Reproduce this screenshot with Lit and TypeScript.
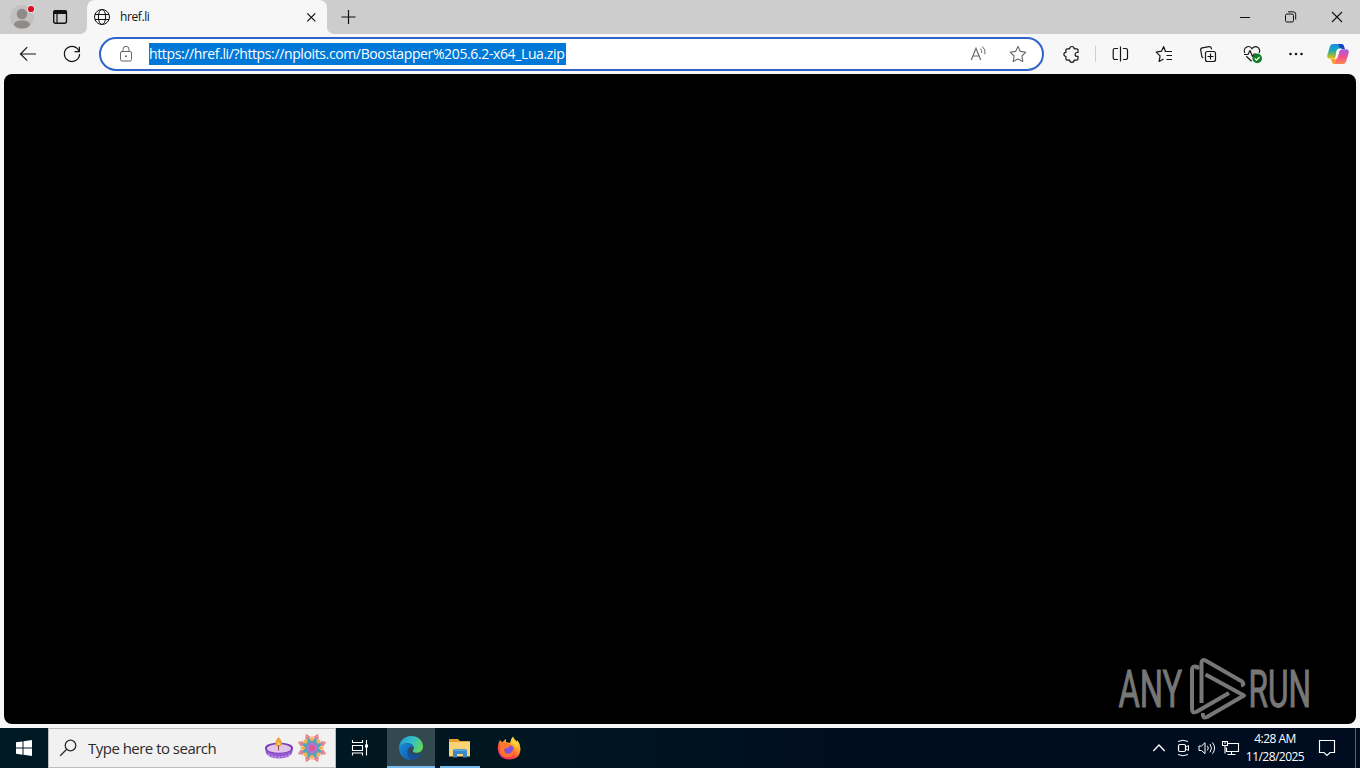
import { LitElement, html, css, svg } from "lit";
import { customElement, property } from "lit/decorators.js";

const icons = {
  profile: svg`
    <circle cx="12" cy="12" r="12" fill="#c3c1bf" />
    <circle cx="12" cy="9" r="5.3" fill="#8f8b88" />
    <ellipse cx="12" cy="19.4" rx="8" ry="4.1" fill="#8f8b88" />
    <circle cx="21" cy="4" r="4" fill="#dedede" />
    <circle cx="21" cy="4" r="3.1" fill="#d80f25" />`,
  tabs: svg`
    <rect x="5.7" y="5.7" width="12.8" height="12.6" rx="2" stroke-width="1.4" />
    <path d="M5.5 6.5a1.5 1.5 0 0 1 1.5-1.5h10.2a1.5 1.5 0 0 1 1.5 1.5v2.5H5.5z" fill="currentColor" stroke="none" />
    <path d="M9 9v9" stroke-width="1.2" />`,
  globe: svg`
    <circle cx="12" cy="12" r="7.5" />
    <ellipse cx="12" cy="12" rx="3.6" ry="7.5" />
    <path d="M5 9.5h14M5 14.5h14" />`,
  close: svg`<path d="M8.3 8.3l8 8M16.300 8.300l-8 8" stroke-width="1.2" />`,
  plus: svg`<path d="M12.5 5v14M5.5 12h14" stroke-width="1.2" />`,
  minimize: svg`<path d="M7 12.5h10" />`,
  restore: svg`
    <rect x="6.5" y="9" width="8" height="8" rx="1.5" />
    <path d="M9 6.800h5.200a2.500 2.500 0 0 1 2.500 2.500v5.200" />`,
  windowClose: svg`<path d="M7 7l10 10M17 7L7 17" stroke-width="1.1" />`,
  back: svg`<path d="M20 12H4.5M11.2 5.2L4.5 12l6.7 6.7" stroke-width="1.2" />`,
  reload: svg`
    <path d="M19.2 9.5A7.6 7.6 0 1 0 19.6 12" stroke-width="1.2" />
    <path d="M19.4 4.8v4.9h-4.9" stroke-width="1.2" />`,
  lock: svg`
    <rect x="6.500" y="9.500" width="11" height="9.500" rx="1.500" />
    <path d="M9 9.500V7.300a3 3 0 0 1 6 0v2.200" />
    <circle cx="12" cy="14.200" r="1" fill="currentColor" stroke="none" />`,
  readAloud: svg`
    <path d="M4.300 18L9 6.200 13.700 18M5.900 14h6.200" stroke-width="1.150" />
    <path d="M13.300 6.500q2 1.800 1.400 4.500M15.300 4.500q3.800 3.300 2.600 7.800" />`,
  star: svg`<path d="M12 4.400l2.400 5 5.400.8-3.900 3.800.9 5.400-4.800-2.500-4.800 2.500.9-5.400-3.900-3.800 5.400-.8z" stroke-width="1.100" stroke-linejoin="round" />`,
  extension: svg`<path d="M7.2 6.800h2.400a2.300 2.300 0 0 1 4.600 0h2.500a1.300 1.300 0 0 1 1.300 1.300v2.400h-1a1.900 1.900 0 0 0 0 3.800h1v2.500a1.300 1.300 0 0 1-1.300 1.300h-2.500a2.300 2.300 0 0 1-4.600 0H7.200a1.300 1.300 0 0 1-1.300-1.300v-2.400a2 2 0 0 1 0-4V8.100a1.300 1.300 0 0 1 1.300-1.300z" stroke-width="1.200" stroke-linejoin="round" />`,
  split: svg`
    <path d="M10 6.500H7A1.800 1.800 0 0 0 5.200 8.300v7.400A1.800 1.800 0 0 0 7 17.500h3M15 6.500h2.700a1.800 1.800 0 0 1 1.800 1.800v7.400a1.800 1.800 0 0 1-1.800 1.800H15M12.500 4.500v15" stroke-width="1.200" />`,
  favorites: svg`
    <path d="M13.500 9.500L11.700 4.600 9.500 9.200l-5.300.9 3.900 3.800-1 5.500 4.400-2.500" stroke-width="1.200" stroke-linejoin="round" />
    <path d="M12.800 9.500H20M14.500 13.500H20M14.500 17.500H20" stroke-width="1.200" />`,
  collections: svg`
    <rect x="9.500" y="9.500" width="10" height="10" rx="2" stroke-width="1.200" />
    <path d="M14.500 11.500v6M11.500 14.500h6" stroke-width="1.200" />
    <path d="M7.300 15.800a2 2 0 0 1-1.500-1.700L4.700 8.200a2 2 0 0 1 1.600-2.300l6.800-1.200a2 2 0 0 1 2.200 1.400l.2 1.200" stroke-width="1.200" />`,
  health: svg`
    <path d="M4.900 11A4.100 4.100 0 0 1 12 6.700a4.100 4.100 0 0 1 7.100 4.300M6.300 14.200l5.300 5" stroke-width="1.200" />
    <path d="M4 12.500h4l2-4 2.500 6 1.500-2.500h2" stroke-width="1.200" stroke-linejoin="round" />
    <circle cx="17.200" cy="16.400" r="4.800" fill="#128024" stroke="none" />
    <path d="M14.800 16.500l1.700 1.600 3-3.100" stroke="#fff" stroke-width="1.200" />`,
  more: svg`
    <g fill="currentColor" stroke="none">
      <circle cx="6.500" cy="12" r="1.300" /><circle cx="12" cy="12" r="1.300" /><circle cx="17.500" cy="12" r="1.300" />
    </g>`,
  copilot: svg`
    <defs>
      <linearGradient id="left" x1="0" y1="0" x2="0" y2="1">
        <stop offset="0" stop-color="#168ee8" /><stop offset=".45" stop-color="#20a7b5" />
        <stop offset=".75" stop-color="#8dbb3d" /><stop offset="1" stop-color="#f3bd18" />
      </linearGradient>
      <linearGradient id="right" x1="0" y1="0" x2="0" y2="1">
        <stop offset="0" stop-color="#a55bea" /><stop offset=".5" stop-color="#ef5090" />
        <stop offset="1" stop-color="#ff8350" />
      </linearGradient>
    </defs>
    <g stroke="none">
      <path d="M7 2h8.500q1.700 0 2.300 1.700l1 3.300h-3q-2 0-2.600 2l-1.500 5q-.8 2.700-3.200 2.700H4q-3.500 0-2.600-4L3.800 5Q4.600 2 7 2z" fill="url(#left)" />
      <path d="M12 2h3.500q1.700 0 2.300 1.700l1 3.300h-4.500z" fill="#174ac2" />
      <path d="M17 22H8.500q-1.700 0-2.300-1.700l-1-3.300h3q2 0 2.600-2l1.500-5q.8-2.700 3.200-2.700H20q3.500 0 2.600 4L20.200 19Q19.400 22 17 22z" fill="url(#right)" />
      <path d="M5.200 17h3.300q1.800 0 2.300-2l-1 5q-.6 2-1.800 2-1.300-.3-1.800-1.700z" fill="#ff9d36" />
      <path d="M11 8.500q.6-1.500 2.200-1.500h2.200q-1.800.3-2.400 2l-1.800 6q-.6 2-2.400 2 .8-.5 1.200-2z" fill="#fff" stroke="#fff" />
    </g>`,
  windows: svg`
    <path d="M4 6.300l6.500-.9v6.100H4zM11.500 5.200L20 4v7.500h-8.500zM4 12.500h6.500v6.200L4 17.800zM11.500 12.500H20V20l-8.500-1.200z" fill="#fff" stroke="none" />`,
  search: svg`
    <circle cx="13.500" cy="9.500" r="5.300" stroke-width="1.300" />
    <path d="M9.700 13.300L3.200 19.800" stroke-width="1.300" />`,
  taskView: svg`
    <path d="M4.500 4v2.500h10V4M4.500 19.500V17h10v2.500M4.500 9.500h10v5h-10zM18.500 4v15.500" stroke-width="1.100" />
    <path d="M17 8.500h3v3h-3z" fill="#fff" stroke="none" />`,
  chevron: svg`<path d="M6.300 15l5.700-6 5.700 6" stroke-width="1.300" />`,
  camera: svg`
    <rect x="7.500" y="8.500" width="7" height="7" rx="1.500" stroke-width="1.200" />
    <path d="M15 11l2.500-1.500v5L15 13M7 5.500q5-2.500 10 0M7 18.500q5 2.500 10 0" />`,
  sound: svg`
    <path d="M4 10v4.500h2.500l3.500 3.200V6.700L6.500 10z" />
    <path d="M12.500 9.800q1.500 2.300 0 4.600M15 8q3 4.200 0 8.300M17.500 6.500q4.200 5.600 0 11.200" />`,
  network: svg`
    <path d="M9 7.500h10.500v8H7.500v-4M12.500 15.500v3M8.500 18.500h8M3.500 5.500h5v4h-5zM6 9.500v8" stroke-width="1.100" />
    <path d="M5 7h2" />`,
  action: svg`<path d="M4.500 4.500h15v12h-4.500l-3 3-3-3H4.500z" stroke-width="1.150" />`,
};

const petals = [0, 45, 90, 135, 180, 225, 270, 315];

@customElement("ui-icon")
class UiIcon extends LitElement {
  @property() name: keyof typeof icons = "close";

  static styles = css`
    :host {
      display: flex;
      flex: none;
      width: 24px;
      height: 24px;
    }
    svg {
      overflow: visible;
    }
  `;

  render() {
    return html`<svg
      width="24"
      height="24"
      viewBox="0 0 24 24"
      fill="none"
      stroke="currentColor"
      stroke-width="1"
    >
      ${this.name === "profile"
        ? svg`<g stroke="none">${icons.profile}</g>`
        : icons[this.name]}
    </svg>`;
  }
}

@customElement("browser-tabs")
class BrowserTabs extends LitElement {
  static styles = css`
    :host {
      display: flex;
      height: 34px;
      background: #f7f7f7;
      color: #111;
    }
    .left {
      display: flex;
      align-items: center;
      box-sizing: border-box;
      width: 87px;
      padding-left: 10px;
      gap: 14px;
      background: #cdcdcd;
      border-bottom-right-radius: 7px;
    }
    .middle {
      background: #cdcdcd;
      width: 240px;
    }
    .tab {
      display: flex;
      align-items: center;
      height: 34px;
      box-sizing: border-box;
      padding: 0 4px 0 3px;
      background: #f7f7f7;
      border-radius: 8px 8px 0 0;
    }
    .title {
      flex: 1;
      padding: 0 0 1px 6px;
      font-size: 12px;
      letter-spacing: -0.4px;
    }
    .right {
      display: flex;
      flex: 1;
      align-items: center;
      padding: 0 11px 0 9px;
      background: #cdcdcd;
      border-bottom-left-radius: 7px;
    }
    .controls {
      display: flex;
      gap: 22px;
      margin-left: auto;
    }
  `;

  render() {
    return html`
      <div class="left">
        <ui-icon name="profile"></ui-icon>
        <ui-icon name="tabs"></ui-icon>
      </div>
      <div class="middle">
        <div class="tab">
          <ui-icon name="globe"></ui-icon>
          <span class="title">href.li</span>
          <ui-icon name="close"></ui-icon>
        </div>
      </div>
      <div class="right">
        <ui-icon name="plus"></ui-icon>
        <div class="controls">
          <ui-icon name="minimize"></ui-icon>
          <ui-icon name="restore"></ui-icon>
          <ui-icon name="windowClose"></ui-icon>
        </div>
      </div>
    `;
  }
}

@customElement("browser-toolbar")
class BrowserToolbar extends LitElement {
  static styles = css`
    :host {
      display: flex;
      align-items: center;
      box-sizing: border-box;
      height: 40px;
      padding: 0 10px 0 16px;
      background: #f7f7f7;
      color: #161616;
    }
    .nav {
      display: flex;
      gap: 20px;
    }
    .address {
      display: flex;
      align-items: center;
      box-sizing: border-box;
      width: 945px;
      height: 34px;
      margin-left: 15px;
      padding: 0 12px 0 13px;
      border: 2px solid #2f65ca;
      border-radius: 17px;
      background: #fff;
      color: #666;
    }
    .url {
      height: 22px;
      width: 417px;
      margin-left: 11px;
      background: #0078d7;
      color: #fff;
      font-size: 14px;
      line-height: 21px;
      letter-spacing: -0.375px;
      white-space: nowrap;
    }
    .inner {
      display: flex;
      gap: 15px;
      margin-left: auto;
    }
    .extension {
      margin-left: 16px;
    }
    .line {
      width: 1px;
      height: 16px;
      margin: 0 12px 0 11px;
      background: #cfcfcf;
    }
    .tools {
      display: flex;
      gap: 20px;
    }
    .copilot {
      margin-left: auto;
    }
  `;

  render() {
    return html`
      <div class="nav">
        <ui-icon name="back"></ui-icon>
        <ui-icon name="reload"></ui-icon>
      </div>
      <div class="address">
        <ui-icon name="lock"></ui-icon>
        <span class="url"
          >https://href.li/?https://nploits.com/Boostapper%205.6.2-x64_Lua.zip</span
        >
        <div class="inner">
          <ui-icon name="readAloud"></ui-icon>
          <ui-icon name="star"></ui-icon>
        </div>
      </div>
      <ui-icon class="extension" name="extension"></ui-icon>
      <div class="line"></div>
      <div class="tools">
        <ui-icon name="split"></ui-icon>
        <ui-icon name="favorites"></ui-icon>
        <ui-icon name="collections"></ui-icon>
        <ui-icon name="health"></ui-icon>
        <ui-icon name="more"></ui-icon>
      </div>
      <ui-icon class="copilot" name="copilot"></ui-icon>
    `;
  }
}

@customElement("page-view")
class PageView extends LitElement {
  static styles = css`
    :host {
      display: flex;
      flex: 1;
      padding: 0 4px 4px;
      background: #f7f7f7;
    }
    .page {
      display: flex;
      flex: 1;
      justify-content: flex-end;
      align-items: flex-end;
      padding: 0 38px 1px 0;
      border-radius: 8px;
      background: #000;
    }
    svg {
      overflow: visible;
    }
    text {
      font-family: "Roboto", sans-serif;
      font-size: 51px;
    }
  `;

  render() {
    return html`
      <div class="page">
        <svg width="204" height="66" viewBox="0 0 204 66" fill="none">
          <g fill="#777" stroke="#777" stroke-width="1">
            <text transform="translate(4.5 49.5) scale(.64 1)">ANY</text>
            <text transform="translate(134.5 49.5) scale(.62 1)">RUN</text>
          </g>
          <g stroke="#777" stroke-width="4" stroke-linejoin="round">
            <path d="M83.500 12.500V10q-5.500-2-5.500 3v39q0 5 5 2.500L115 36" />
            <path d="M87.500 46V6q0-4 4-2.500l36.500 21q3.500 3-1 4" />
            <path d="M91.500 17.500L130 38.500 93 60q-5 2-4-4" />
          </g>
        </svg>
      </div>
    `;
  }
}

@customElement("task-bar")
class TaskBar extends LitElement {
  static styles = css`
    :host {
      display: flex;
      height: 40px;
      background: linear-gradient(90deg, #001a23, #001620 40%, #000c20 65%, #000d21);
      color: #fff;
    }
    .start,
    .task {
      display: flex;
      align-items: center;
      justify-content: center;
      width: 48px;
    }
    .search {
      display: flex;
      align-items: center;
      box-sizing: border-box;
      width: 288px;
      padding: 0 7px 0 8px;
      border: 1px solid #bcbcbc;
      background: #f1f1f1;
      color: #2b2b2b;
    }
    .hint {
      padding-left: 7px;
      font-size: 15px;
      letter-spacing: -0.52px;
      white-space: nowrap;
    }
    .festive {
      display: flex;
      gap: 2px;
      margin-left: auto;
    }
    .edge,
    .explorer {
      box-sizing: border-box;
      padding-top: 2px;
      border-bottom: 2px solid #76b9ed;
    }
    .edge {
      margin-left: 3px;
      background: #324950;
    }
    .explorer {
      width: 40px;
      margin: 0 5px;
    }
    .tray {
      display: flex;
      align-items: center;
      margin-left: auto;
    }
    .clock {
      width: 64px;
      font-size: 12px;
      line-height: 18px;
      letter-spacing: -0.53px;
      text-align: center;
      white-space: nowrap;
    }
    .action {
      margin: 0 16px 0 8px;
    }
    .desktop {
      width: 4px;
      height: 40px;
      border-left: 1px solid #59616d;
    }
  `;

  renderDiya() {
    return html`
      <svg width="30" height="30" viewBox="0 0 30 30">
        <path d="M1 16q0 10.500 14 10.500T29 16z" fill="#9559d3" />
        <ellipse cx="15" cy="16" rx="14" ry="5.500" fill="#7940b4" />
        <ellipse cx="15" cy="16.500" rx="12" ry="4.300" fill="#e3c5ec" />
        <path d="M4 22.500q11 5.500 22 0" fill="none" stroke="#c49af0" stroke-width="1.500" stroke-dasharray="2 1.500" />
        <path d="M14.500 5q5 5.500 2.500 8.500-2.500 3-5 0Q10 9.500 14.500 5z" fill="#eea33c" />
        <path d="M14.500 9.500q2 3 0 5-2-2 0-5z" fill="#ffe36a" />
        <path d="M14.500 13v5.500" stroke="#8b4c36" />
      </svg>
    `;
  }

  renderRangoli() {
    return html`
      <svg width="32" height="32" viewBox="-16 -16 32 32">
        ${petals.map(
          (angle) => svg`<path d="M0-12L3.500-7 0-3-3.500-7z" fill="#f3b34c" transform="rotate(${angle})" />`
        )}
        ${petals.map(
          (angle) => svg`<path d="M0-15.500L3-11 0-8-3-11z" fill="#ec8590" transform="rotate(${angle + 22.5})" />`
        )}
        ${petals.map(
          (angle) => svg`<path d="M0-11.500L3-5 0-2-3-5z" fill="#45a9bb" transform="rotate(${angle + 22.5})" />`
        )}
        ${petals.map(
          (angle) => svg`<ellipse cy="-3.500" rx="1.800" ry="3" fill="#a979c8" transform="rotate(${angle})" />`
        )}
        <circle r="3" fill="#e0559a" />
      </svg>
    `;
  }

  renderEdge() {
    return html`
      <svg width="24" height="24" viewBox="0 0 24 24">
        <defs>
          <linearGradient id="wave" x1="0" y1=".3" x2="1" y2=".6">
            <stop offset="0" stop-color="#249bdc" /><stop offset=".5" stop-color="#31bfc8" />
            <stop offset="1" stop-color="#65d957" />
          </linearGradient>
          <linearGradient id="base" x1="0" y1="0" x2="1" y2="1">
            <stop offset="0" stop-color="#168edb" /><stop offset="1" stop-color="#1257a8" />
          </linearGradient>
        </defs>
        <path d="M0 12C.4 5 5 0 12 0c7.500 0 12 5 12 10.500 0 4-3 6.300-6.500 6.300-3.200 0-4.300-1.300-3.500-2.500 2.500-3.400-.8-7-5.500-7C4 7.300 1 9.500 0 12z" fill="url(#wave)" />
        <path d="M0 12c1-3 4-4.800 8-4.800 3.500 0 6.500 2 6.500 4.800-1-1.300-4-1.500-5.200.8C6.800 17.500 11 24 13.500 23.900 6 25 0 19.500 0 12z" fill="url(#base)" />
        <path d="M9.300 12.800C6.500 18 11 24 14 23.800c3-.4 6-2 8-5.200.3-.6-.2-.8-.7-.6-5.800 2.400-11.500-.3-12-5.200z" fill="#164f9c" />
      </svg>
    `;
  }

  renderExplorer() {
    return html`
      <svg width="24" height="24" viewBox="0 0 24 24">
        <path d="M1 3h9l2 2h10v3H1z" fill="#e5a12b" />
        <path d="M1 6h21v14.500H1z" fill="#f8d477" />
        <path d="M5 21.500V15q0-2 2-2h10q2 0 2 2v6.500h-4V18H9v3.500z" fill="#3b86c4" />
        <path d="M6 13.500h12v1.500H6z" fill="#62aadb" />
      </svg>
    `;
  }

  renderFirefox() {
    return html`
      <svg width="24" height="24" viewBox="0 0 24 24">
        <defs>
          <linearGradient id="fire" x1=".85" y1="0" x2=".2" y2="1">
            <stop offset="0" stop-color="#fff04a" /><stop offset=".35" stop-color="#ffac26" />
            <stop offset=".65" stop-color="#ff5437" /><stop offset="1" stop-color="#ed257c" />
          </linearGradient>
        </defs>
        <path d="M3 4q1 2 3 2 1-2 3-3v3l4 1q.5-4 3-6.500 1 3 4 5l.5-1.200Q23.500 8 23.500 13 23 23.500 12 23.500 1.300 23 .8 13 .5 8 3 4z" fill="url(#fire)" />
        <circle cx="12" cy="13.500" r="4.800" fill="#8250df" />
        <path d="M6 7q3-1 6 1l3 2q-4 0-4 2-4-.5-4 2.500 1 4 5 3 4-.5 4-5.500 2 7-4 9-7 1-9-5-.5-5 2-9z" fill="#ff762e" />
        <path d="M14 6q4 2 5 6l2-4-4-4z" fill="#ffd43a" />
      </svg>
    `;
  }

  render() {
    return html`
      <div class="start"><ui-icon name="windows"></ui-icon></div>
      <div class="search">
        <ui-icon name="search"></ui-icon>
        <span class="hint">Type here to search</span>
        <div class="festive">${this.renderDiya()}${this.renderRangoli()}</div>
      </div>
      <div class="task"><ui-icon name="taskView"></ui-icon></div>
      <div class="task edge">${this.renderEdge()}</div>
      <div class="task explorer">${this.renderExplorer()}</div>
      <div class="task">${this.renderFirefox()}</div>
      <div class="tray">
        <ui-icon name="chevron"></ui-icon>
        <ui-icon name="camera"></ui-icon>
        <ui-icon name="sound"></ui-icon>
        <ui-icon name="network"></ui-icon>
        <div class="clock">
          <div>4:28 AM</div>
          <div>11/28/2025</div>
        </div>
        <ui-icon class="action" name="action"></ui-icon>
        <div class="desktop"></div>
      </div>
    `;
  }
}

@customElement("app-root")
class AppRoot extends LitElement {
  static styles = css`
    :host {
      display: flex;
      flex-direction: column;
      height: 100vh;
      overflow: hidden;
      font-family: "Open Sans", "Noto Sans", sans-serif;
    }
  `;

  render() {
    return html`
      <browser-tabs></browser-tabs>
      <browser-toolbar></browser-toolbar>
      <page-view></page-view>
      <task-bar></task-bar>
    `;
  }
}
